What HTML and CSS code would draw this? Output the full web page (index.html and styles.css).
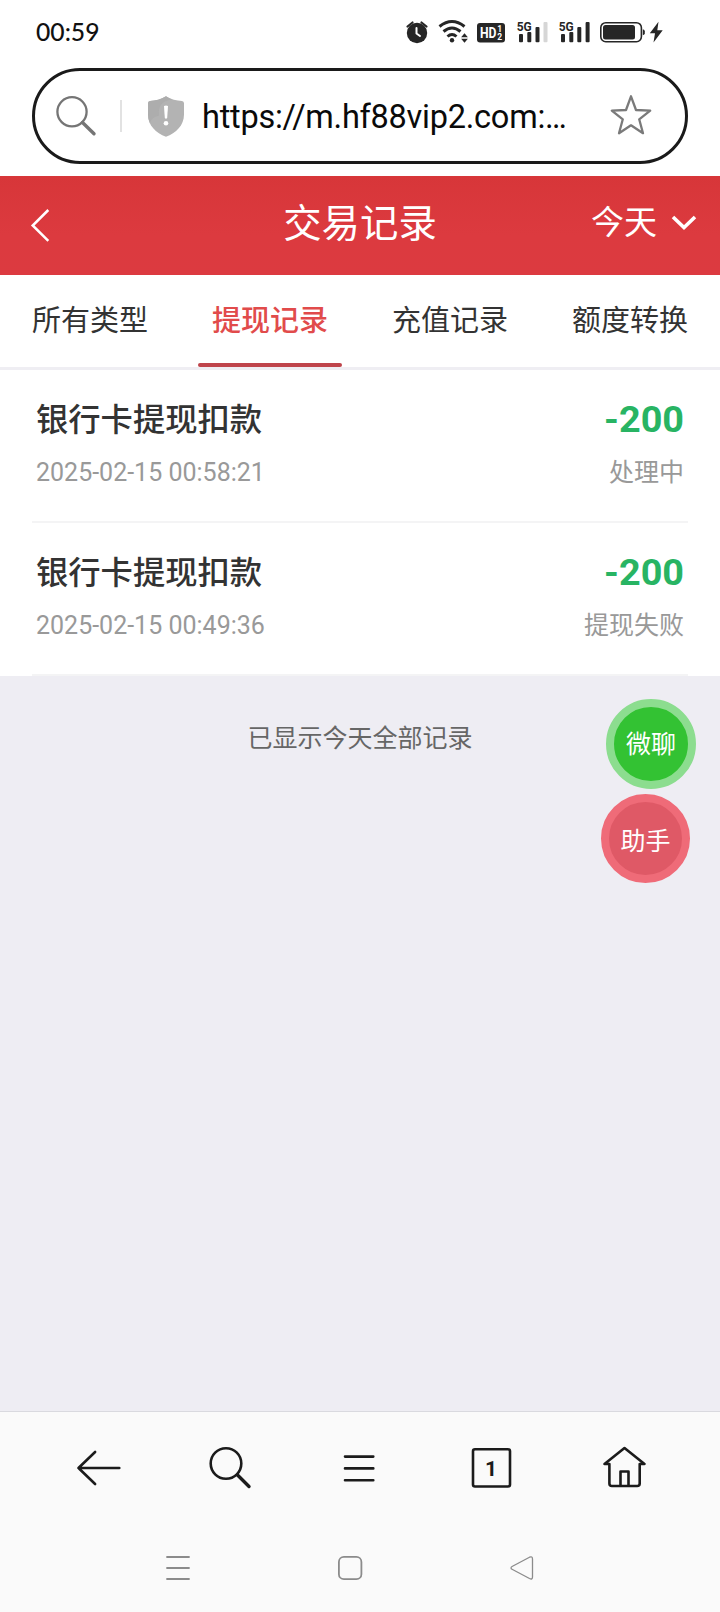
FILE: index.html
```html
<!DOCTYPE html>
<html lang="zh-CN">
<head>
<meta charset="utf-8">
<title>交易记录</title>
<link rel="stylesheet" href="styles.css">
</head>
<body>
<div class="screen">
  <div class="status-bar">
    <span class="clock">00:59</span>
    <svg class="status-icons" width="270" height="28" viewBox="400 18 270 28">
      <g fill="#262626">
        <circle cx="417" cy="33" r="10.2"/>
        <path d="M407.500 26.500l5-4M426.500 26.500l-5-4" stroke="#262626" stroke-width="2.200" stroke-linecap="round"/>
        <path d="M416.500 28v5.500l3.500 2.500" stroke="#fff" stroke-width="2" fill="none" stroke-linecap="round" stroke-linejoin="round"/>
        <g fill="none" stroke="#262626" stroke-width="3">
          <path d="M439.500 26.500Q452 16.500 464.500 26.500"/>
          <path d="M443.500 31.500Q452 24.500 460.500 31.500"/>
          <path d="M447.500 36.500Q452 32.500 456.500 36.500"/>
        </g>
        <circle cx="452" cy="40.200" r="2.200"/>
        <path d="M464.500 33.200l3.400 4h-6.800zM464.500 42.800l3.400-4h-6.800z"/>
        <rect x="477" y="23" width="28" height="19.500" rx="3"/>
        <text class="hd" x="480" y="37.600" textLength="16.500" lengthAdjust="spacingAndGlyphs">HD</text>
        <text class="sim" x="497.200" y="31.800">1</text>
        <text class="sim" x="497.200" y="40.200">2</text>
        <text class="net" x="516.700" y="30.900" textLength="15" lengthAdjust="spacingAndGlyphs">5G</text>
        <rect x="519" y="34" width="4" height="8.300" rx="1"/>
        <rect x="527.300" y="32" width="4" height="10.300" rx="1"/>
        <rect x="535.500" y="27" width="4" height="15.300" rx="1"/>
        <rect x="543.500" y="22" width="4" height="20.300" rx="1" fill="#d6d6d6"/>
        <text class="net" x="558.700" y="30.900" textLength="15" lengthAdjust="spacingAndGlyphs">5G</text>
        <rect x="561" y="34" width="4" height="8.300" rx="1"/>
        <rect x="569.300" y="32" width="4" height="10.300" rx="1"/>
        <rect x="577.300" y="27" width="4" height="15.300" rx="1"/>
        <rect x="585.600" y="22" width="4" height="20.300" rx="1"/>
        <rect x="600.800" y="22.700" width="40.600" height="19" rx="5" fill="none" stroke="#262626" stroke-width="1.600"/>
        <rect x="603" y="25" width="32" height="14.500" rx="2.500"/>
        <path d="M642.800 29.300q2 .5 2 2v2q0 1.500-2 2z"/>
        <path d="M658.500 21.800L649.800 33.300H655L653.500 42.600L662.700 30.200H657.300Z"/>
      </g>
    </svg>
  </div>

  <div class="address-wrap">
    <div class="address-bar">
      <svg width="44" height="44" viewBox="54 94 44 44" fill="none" stroke="#757575">
        <circle cx="72" cy="111.800" r="14.600" stroke-width="2.300"/>
        <path d="M82.500 122.500L94 133.800" stroke-width="3.400" stroke-linecap="round"/>
      </svg>
      <span class="divider"></span>
      <svg class="shield" width="36" height="41" viewBox="148 95.500 36 41">
        <path d="M166 95.700C161 98.800 155.500 100.200 150 100.400Q148 100.600 148 102.800V114C148 125 156 132.500 166 136.300C176 132.500 184 125 184 114V102.800Q184 100.600 182 100.400C176.500 100.200 171 98.800 166 95.700Z" fill="#b3b3b3"/>
        <path d="M166 95.700C161 98.800 155.500 100.200 150 100.400Q148 100.600 148 102.800V114Q148 119 150 123Q151 117 159 115Q157 101 172 99Q168.500 97.500 166 95.700Z" fill="#adadad"/>
        <path d="M164 105.500Q166 104.400 168 105.500L167.200 117.500Q166 118.800 164.800 117.500Z" fill="#fff"/>
        <circle cx="166" cy="122.800" r="2.300" fill="#fff"/>
      </svg>
      <span class="url">https://m.hf88vip2.com:…</span>
      <svg class="star" width="44" height="44" viewBox="610 91 44 44">
        <path d="M632 95.300L637 109L651.200 109.600L640.200 118.300L644 132.200L632 124.300L620 132.200L623.800 118.300L612.800 109.600L627 109Z" fill="none" stroke="#7a7a7a" stroke-width="2.300" stroke-linejoin="round"/>
      </svg>
    </div>
  </div>

  <header class="page-header">
    <svg width="20" height="36" viewBox="30 208 20 36" fill="none" stroke="#fff" stroke-width="2.500"><path d="M48.300 210L32.700 225.500L48.300 240.800"/></svg>
    <h1 class="page-title">交易记录</h1>
    <div class="range">今天
      <svg width="26" height="18" viewBox="671 213 26 18" fill="none" stroke="#fff" stroke-width="3.600"><path d="M673 216L684 226.500L695 216"/></svg>
    </div>
  </header>

  <nav class="tabs">
    <div class="tab">所有类型</div>
    <div class="tab active">提现记录</div>
    <div class="tab">充值记录</div>
    <div class="tab">额度转换</div>
  </nav>

  <main class="records">
    <div class="record">
      <div class="line"><span class="name">银行卡提现扣款</span><span class="amount">-200</span></div>
      <div class="line meta"><span class="date">2025-02-15 00:58:21</span><span class="state">处理中</span></div>
    </div>
    <div class="record">
      <div class="line"><span class="name">银行卡提现扣款</span><span class="amount">-200</span></div>
      <div class="line meta"><span class="date">2025-02-15 00:49:36</span><span class="state">提现失败</span></div>
    </div>
  </main>

  <div class="rest">
    <p class="end-note">已显示今天全部记录</p>
  </div>
  <div class="float chat">微聊</div>
  <div class="float helper">助手</div>

  <footer class="bottom">
    <div class="toolbar">
      <svg viewBox="74.500 1444 48 48"><path d="M94.600 1452L78 1468L94.600 1484M78 1468H118.800"/></svg>
      <svg viewBox="205.500 1444 48 48"><circle cx="225.500" cy="1463.500" r="15.300"/><path d="M237 1475L248.500 1486.500" stroke-width="3.400"/></svg>
      <svg viewBox="336.500 1444 48 48"><path d="M344.500 1456.600H372.800M344.500 1468.400H372.800M344.500 1480.200H372.800"/></svg>
      <svg viewBox="467.500 1444 48 48"><rect x="472.500" y="1449.300" width="37" height="37.200" rx="2"/><text class="tab-count" x="490.500" y="1476">1</text></svg>
      <svg viewBox="598.500 1444 48 48"><path d="M608.900 1464H604L624 1448L644 1464H639.200V1483.500Q639.200 1486 636.700 1486H611.400Q608.900 1486 608.900 1483.500ZM620 1486V1471.500H628V1486"/></svg>
    </div>
    <div class="system-nav">
      <svg viewBox="162 1552 32 32"><path d="M167 1557H189M167 1568H189M167 1579H189"/></svg>
      <svg viewBox="334 1552 32 32"><rect x="338.900" y="1556.900" width="22.500" height="22.300" rx="5"/></svg>
      <svg viewBox="506 1552 32 32"><path d="M512.500 1566.300L529.500 1557.200Q532.500 1556 532.500 1559V1577Q532.500 1580 529.500 1578.500L512.500 1569.500Q509.500 1567.900 512.500 1566.300Z" stroke-width="1.300"/></svg>
    </div>
  </footer>
</div>
</body>
</html>
```

FILE: styles.css
```css
* { box-sizing: border-box; }

body {
  margin: 0;
  background: #fff;
  font-family: Roboto, "Noto Sans CJK SC", sans-serif;
  color: #333;
}

.screen {
  position: relative;
  display: flex;
  flex-direction: column;
  width: 720px;
  height: 1612px;
  overflow: hidden;
}

.status-bar {
  display: flex;
  align-items: center;
  justify-content: space-between;
  height: 64px;
  padding: 0 50px 0 36px;
}
.clock { font: 500 24.700px/30px Lato, sans-serif; color: #111; }
.hd { font: 700 14px Roboto, sans-serif; fill: #fff; }
.sim { font: 700 8.500px Roboto, sans-serif; fill: #fff; }
.net { font: 700 13.500px Roboto, sans-serif; }

.address-wrap { height: 112px; padding: 4px 32px 0; }
.address-bar {
  display: flex;
  align-items: center;
  height: 96px;
  padding: 0 32px 0 19px;
  border: 3px solid #1a1a1a;
  border-radius: 48px;
}
.divider { width: 2px; height: 32px; margin: 0 26px 0 22px; background: #e2e2e2; }
.url { flex: 1; margin: 2px 0 0 18px; font-size: 32.500px; line-height: 40px; letter-spacing: -0.250px; color: #0a0a0a; white-space: nowrap; }
.star { margin-bottom: 5px; }

.page-header {
  display: grid;
  grid-template-columns: 1fr auto 1fr;
  align-items: center;
  height: 99px;
  padding: 0 23px;
  background: linear-gradient(#d73639, #dc3a3f 60%, #dc3a40);
  color: #fff;
}
.page-header > svg { margin-left: 7px; }
.page-title { margin: 0 0 3px; font-size: 38.400px; line-height: 50px; font-weight: 400; }
.range { display: flex; justify-content: flex-end; align-items: center; gap: 14px; margin-bottom: 6px; font-size: 33px; line-height: 44px; }

.tabs {
  display: grid;
  grid-template-columns: repeat(4, 180px);
  height: 95px;
  border-bottom: 3px solid #efeef3;
}
.tab {
  display: flex;
  flex-direction: column;
  align-items: center;
  padding-top: 26px;
  font-size: 29px;
  line-height: 40px;
}
.tab.active { color: #e14b4b; font-weight: 500; }
.tab.active::after { content: ""; width: 144px; height: 4px; margin-top: 22px; border-radius: 2px; background: #bf444b; }

.records { padding: 0 32px; }
.record { height: 153px; padding: 28px 4px 0; border-bottom: 2px solid #f4f4f5; }
.line { display: flex; justify-content: space-between; align-items: center; height: 42px; }
.meta { margin-top: 10px; color: #999; }
.name { padding-bottom: 5px; font-size: 32.300px; font-weight: 500; }
.amount { font-size: 37.800px; font-weight: 700; color: #28b463; }
.date { padding-top: 3px; font-size: 25px; }
.state { padding-bottom: 3px; font-size: 25px; }

.rest { flex: 1; background: #eeedf3; text-align: center; }
.end-note { margin: 43px 0 0; font-size: 25px; line-height: 40px; color: #666; }

.float {
  position: absolute;
  display: flex;
  align-items: center;
  justify-content: center;
  border-radius: 50%;
  font-size: 25px;
  color: #fff;
}
.chat { left: 606px; top: 699px; width: 90px; height: 90px; padding-bottom: 4px; background: #33c233; border: 8px solid #8cdd8f; }
.helper { left: 601px; top: 794px; width: 89px; height: 89px; background: #df5966; border: 8px solid #ef6b78; }

.bottom { height: 201px; border-top: 1px solid #d9d9df; background: #fafafa; }
.bottom svg { fill: none; stroke-linecap: round; stroke-linejoin: round; }
.toolbar { display: grid; grid-template-columns: repeat(5, 131px); justify-items: center; padding: 32px 0 0 33px; }
.toolbar svg { width: 48px; height: 48px; stroke: #1b1b1b; stroke-width: 2.600px; }
.toolbar .tab-count { font: 700 21px Roboto, sans-serif; text-anchor: middle; fill: #1b1b1b; stroke: none; }
.system-nav { display: grid; grid-template-columns: repeat(3, 172px); justify-items: center; padding: 60px 0 0 92px; }
.system-nav svg { width: 32px; height: 32px; stroke: #8b8b8b; stroke-width: 1.800px; }
```
